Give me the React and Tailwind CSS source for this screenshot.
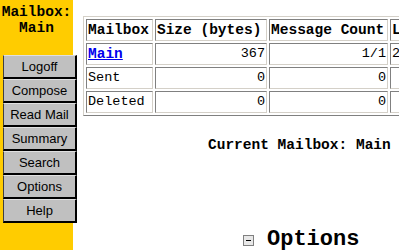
export default function App() {
    const mono = { fontFamily: '"Liberation Mono", "DejaVu Sans Mono", monospace' };
    const navItems = ['Logoff', 'Compose', 'Read Mail', 'Summary', 'Search', 'Options', 'Help'];

    const rows = [
        { name: 'Main', size: '367', count: '1/1', last: '2', link: true },
        { name: 'Sent', size: '0', count: '0', last: '' },
        { name: 'Deleted', size: '0', count: '0', last: '' },
    ];

    const cell = 'border border-t-[#808080] border-l-[#808080] border-r-[#d4d0c8] border-b-[#d4d0c8] px-[1px] h-[22px] p-0';

    return (
        <div className="w-[399px] h-[250px] overflow-hidden bg-white flex" style={mono}>
            {/* left nav */}
            <div className="w-[73px] shrink-0 bg-[#ffcc00] h-[250px] flex flex-col">
                <div className="pt-[4px] text-center font-bold text-[14.5px] leading-[16px] text-black">
                    <div>Mailbox:</div>
                    <div>Main</div>
                </div>
                <div className="mt-[19px] ml-[3px] w-[74px] flex flex-col" style={{ fontFamily: '"Liberation Sans", Arial, sans-serif' }}>
                    {navItems.map(item => (
                        <div
                            key={item}
                            className="h-[24px] bg-[#c0c0c0] border-t border-l border-t-[#e0e0e0] border-l-[#404040] border-r-2 border-b-2 border-r-black border-b-black flex items-center justify-center text-[13px] text-black"
                        >
                            {item}
                        </div>
                    ))}
                </div>
            </div>

            {/* main content */}
            <div className="flex-1 relative">
                <div className="mt-[16px] ml-[10px] w-[420px]">
                    <table
                        className="border-separate border border-t-[#d4d0c8] border-l-[#d4d0c8] border-r-[#808080] border-b-[#808080] text-[13.5px] leading-[16px] text-black"
                        style={{ borderSpacing: '2px' }}
                    >
                        <thead>
                            <tr className="font-bold text-[14.5px]">
                                <td className={`${cell} w-[67px] text-left`}>Mailbox</td>
                                <td className={`${cell} w-[113px]`}>Size (bytes)</td>
                                <td className={`${cell} w-[120px]`}>Message Count</td>
                                <td className={`${cell} w-[110px] whitespace-nowrap`}>Last Message</td>
                            </tr>
                        </thead>
                        <tbody>
                            {rows.map(r => (
                                <tr key={r.name}>
                                    <td className={cell}>
                                        {r.link
                                            ? <a href="#" className="text-[#0000ee] underline font-bold text-[14.5px]">{r.name}</a>
                                            : r.name}
                                    </td>
                                    <td className={`${cell} text-right`}>{r.size}</td>
                                    <td className={`${cell} text-right`}>{r.count}</td>
                                    <td className={`${cell} whitespace-nowrap`}>{r.last}</td>
                                </tr>
                            ))}
                        </tbody>
                    </table>
                </div>

                <div className="mt-[21px] ml-[135px] whitespace-nowrap font-bold text-[14.5px] leading-[16px] text-black">
                    Current Mailbox: Main
                </div>

                <div className="mt-[75px] ml-[170px] flex items-center gap-[13px] whitespace-nowrap">
                    <div className="w-[11px] h-[11px] border border-[#808080] bg-[#e8e8e8] flex items-center justify-center">
                        <div className="w-[5px] h-[1px] bg-black" />
                    </div>
                    <div className="font-bold text-[22px] leading-[24px] text-black">Options</div>
                </div>
            </div>
        </div>
    );
}
